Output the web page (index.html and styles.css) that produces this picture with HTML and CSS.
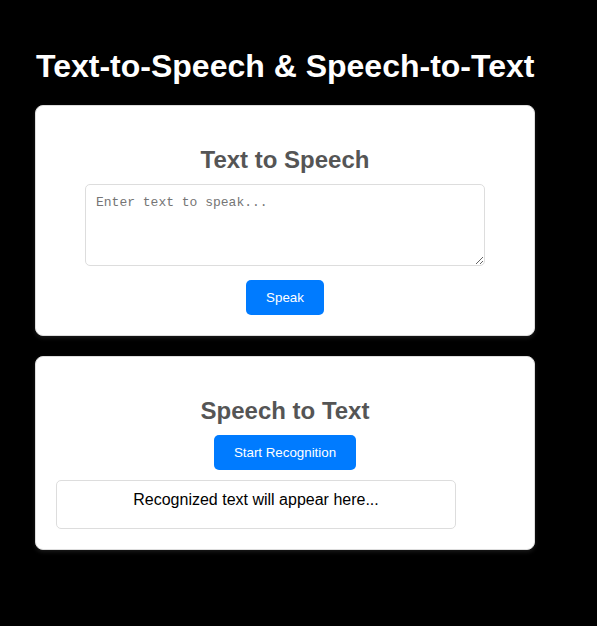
FILE: index.html
```html
<!DOCTYPE html>
<html lang="en">
<head>
<meta charset="utf-8">
<title>Text-to-Speech &amp; Speech-to-Text</title>
<link rel="stylesheet" href="styles.css">
</head>
<body>
<div class="page">
  <h1 class="title">Text-to-Speech &amp; Speech-to-Text</h1>
  <section class="card">
    <h2 class="card-title">Text to Speech</h2>
    <textarea class="input" placeholder="Enter text to speak..."></textarea>
    <button class="btn">Speak</button>
  </section>
  <section class="card">
    <h2 class="card-title">Speech to Text</h2>
    <button class="btn">Start Recognition</button>
    <div class="output">Recognized text will appear here...</div>
  </section>
</div>
</body>
</html>
```
FILE: styles.css
```css
html, body {
  margin: 0;
  background: #000;
}
body {
  font-family: "Liberation Sans", Arial, sans-serif;
}
.page {
  padding: 27px 35px 25px;
}
.title {
  margin: 21.44px 0 19.44px;
  font-size: 32px;
  font-weight: bold;
  color: #fff;
  padding-left: 1px;
}
.card {
  box-sizing: border-box;
  width: 500px;
  background: #fff;
  border: 1px solid #ddd;
  border-radius: 8px;
  padding: 20px;
  margin-bottom: 20px;
  text-align: center;
  box-shadow: 0 2px 4px rgba(255,255,255,0.1);
}
.card-title {
  margin: 20px 0 10px;
  font-size: 24px;
  font-weight: bold;
  color: #555;
  line-height: normal;
}
.input {
  display: block;
  box-sizing: border-box;
  width: 400px;
  height: 82px;
  margin: 0 auto 14px;
  padding: 10px;
  border: 1px solid #ddd;
  border-radius: 5px;
  font-family: "Liberation Mono", monospace;
  font-size: 13px;
}
.input::placeholder {
  color: #757575;
}
.btn {
  display: block;
  margin: 0 auto;
  padding: 10px 20px;
  border: none;
  border-radius: 5px;
  background: #007bff;
  color: #fff;
  font-family: "Liberation Sans", Arial, sans-serif;
  font-size: 13.333px;
  line-height: normal;
}
.output {
  box-sizing: border-box;
  width: 400px;
  min-height: 49px;
  margin-top: 10px;
  padding: 10px;
  border: 1px solid #ddd;
  border-radius: 5px;
  font-size: 16px;
  color: #000;
  text-align: center;
}
```
